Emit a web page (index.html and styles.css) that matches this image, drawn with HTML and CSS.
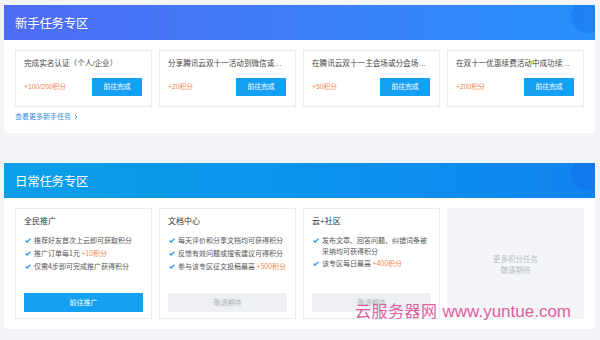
FILE: index.html
```html
<!DOCTYPE html>
<html lang="zh-CN">
<head>
<meta charset="utf-8">
<title>积分任务</title>
<link rel="stylesheet" href="styles.css">
</head>
<body>
<div class="page">
  <section class="panel">
    <div class="panel-head head-new"><h2>新手任务专区</h2></div>
    <div class="panel-body">
      <div class="cards">
        <div class="task">
          <div class="task-title">完成实名认证（个人/企业）</div>
          <div class="task-row"><span class="pts">+100/200积分</span><span class="btn">前往完成</span></div>
        </div>
        <div class="task">
          <div class="task-title">分享腾讯云双十一活动到微信或朋友圈</div>
          <div class="task-row"><span class="pts">+20积分</span><span class="btn">前往完成</span></div>
        </div>
        <div class="task">
          <div class="task-title">在腾讯云双十一主会场或分会场购买</div>
          <div class="task-row"><span class="pts">+50积分</span><span class="btn">前往完成</span></div>
        </div>
        <div class="task">
          <div class="task-title">在双十一优惠续费活动中成功续费云服务器</div>
          <div class="task-row"><span class="pts">+200积分</span><span class="btn">前往完成</span></div>
        </div>
      </div>
      <a class="more" href="#">查看更多新手任务<svg class="chev" viewBox="0 0 6 8" width="4" height="6"><path d="M1.5 1 L4.5 4 L1.5 7" fill="none" stroke="#2f8de4" stroke-width="1.4"/></svg></a>
    </div>
  </section>

  <section class="panel panel-daily">
    <div class="panel-head head-daily"><h2>日常任务专区</h2></div>
    <div class="panel-body body-daily">
      <div class="cards">
        <div class="daily">
          <div class="daily-title">全民推广</div>
          <ul class="list">
            <li><svg class="ck" viewBox="0 0 6 5"><path d="M0.6 2.6 L2.2 4.1 L5.4 0.8" fill="none" stroke="#3a9be6" stroke-width="1.4"/></svg><span>推荐好友首次上云即可获取积分</span></li>
            <li><svg class="ck" viewBox="0 0 6 5"><path d="M0.6 2.6 L2.2 4.1 L5.4 0.8" fill="none" stroke="#3a9be6" stroke-width="1.4"/></svg><span>推广订单每1元 <em>+10积分</em></span></li>
            <li><svg class="ck" viewBox="0 0 6 5"><path d="M0.6 2.6 L2.2 4.1 L5.4 0.8" fill="none" stroke="#3a9be6" stroke-width="1.4"/></svg><span>仅需4步即可完成推广获得积分</span></li>
          </ul>
          <span class="wide-btn go">前往推广</span>
        </div>
        <div class="daily">
          <div class="daily-title">文档中心</div>
          <ul class="list">
            <li><svg class="ck" viewBox="0 0 6 5"><path d="M0.6 2.6 L2.2 4.1 L5.4 0.8" fill="none" stroke="#3a9be6" stroke-width="1.4"/></svg><span>每天评价和分享文档均可获得积分</span></li>
            <li><svg class="ck" viewBox="0 0 6 5"><path d="M0.6 2.6 L2.2 4.1 L5.4 0.8" fill="none" stroke="#3a9be6" stroke-width="1.4"/></svg><span>反馈有效问题或搜索建议可得积分</span></li>
            <li><svg class="ck" viewBox="0 0 6 5"><path d="M0.6 2.6 L2.2 4.1 L5.4 0.8" fill="none" stroke="#3a9be6" stroke-width="1.4"/></svg><span>参与该专区征文投稿最高 <em>+500积分</em></span></li>
          </ul>
          <span class="wide-btn wait">敬请期待</span>
        </div>
        <div class="daily">
          <div class="daily-title">云+社区</div>
          <ul class="list">
            <li><svg class="ck" viewBox="0 0 6 5"><path d="M0.6 2.6 L2.2 4.1 L5.4 0.8" fill="none" stroke="#3a9be6" stroke-width="1.4"/></svg><span>发布文章、回答问题、纠错词条被采纳均可获得积分</span></li>
            <li><svg class="ck" viewBox="0 0 6 5"><path d="M0.6 2.6 L2.2 4.1 L5.4 0.8" fill="none" stroke="#3a9be6" stroke-width="1.4"/></svg><span>该专区每日最高 <em>+400积分</em></span></li>
          </ul>
          <span class="wide-btn wait">敬请期待</span>
        </div>
        <div class="placeholder">
          <span>更多积分任务</span>
          <span>敬请期待</span>
        </div>
      </div>
    </div>
  </section>
</div>
<div class="watermark"><span class="wm-cn">云服务器网</span> <span class="wm-en">www.yuntue.com</span></div>
</body>
</html>
```

FILE: styles.css
```css
* { box-sizing: border-box; }
html, body { margin: 0; padding: 0; }
body {
  width: 600px;
  height: 340px;
  overflow: hidden;
  background: #f3f5f8;
  font-family: "Liberation Sans", "Noto Sans CJK SC", sans-serif;
  font-size: 7px;
  line-height: 10px;
  color: #333;
  position: relative;
}
.page {
  padding: 5px 5px 0 4px;
}
.panel {
  background: #fff;
  width: 591px;
}
.panel-daily { margin-top: 30px; }
.panel-head {
  height: 35px;
  padding-left: 11px;
  display: flex;
  align-items: center;
  position: relative;
  overflow: hidden;
}
.panel-head h2 {
  margin: 0;
  font-family: "Noto Sans CJK SC", sans-serif;
  font-size: 12.5px;
  line-height: 16px;
  font-weight: 400;
  color: #fff;
  letter-spacing: -0.3px;
}
.panel-head::after {
  content: "";
  position: absolute;
  right: -10px;
  top: -6px;
  width: 34px;
  height: 34px;
  border-radius: 50%;
  background: rgba(10, 90, 230, 0.25);
}
.head-new { background: linear-gradient(90deg, #4e6bf4 0%, #3d80f8 55%, #268ff9 100%); }
.head-daily { background: linear-gradient(90deg, #0b9fe9 0%, #0b94ec 50%, #1284f0 100%); }
.panel-body {
  padding: 10px 10px 0 11px;
}
.body-daily { padding-bottom: 10px; }
.cards {
  display: grid;
  grid-template-columns: repeat(4, 137px);
  column-gap: 7px;
}
.task {
  height: 57px;
  border: 1px solid #e9ecf1;
  padding: 8px 9px 0 8px;
}
.task-title {
  font-size: 7.6px;
  line-height: 9px;
  color: #444;
  white-space: nowrap;
  overflow: hidden;
  text-overflow: ellipsis;
}
.task-row {
  margin-top: 10px;
  display: flex;
  align-items: center;
  justify-content: space-between;
}
.pts {
  font-size: 6.8px;
  color: #f0884e;
}
.btn {
  width: 50px;
  height: 18px;
  background: #16a0f3;
  color: #fff;
  font-size: 6.8px;
  display: flex;
  align-items: center;
  justify-content: center;
}
.more {
  display: flex;
  width: max-content;
  align-items: center;
  gap: 3px;
  margin-top: 5px;
  padding-bottom: 11px;
  font-size: 7px;
  line-height: 10px;
  color: #2f8de4;
  text-decoration: none;
}
.chev { display: block; }
.daily {
  height: 111px;
  border: 1px solid #e9ecf1;
  padding: 8px 7px 0 8px;
  display: flex;
  flex-direction: column;
}
.daily-title {
  font-size: 8px;
  line-height: 10px;
  color: #333;
}
.list {
  list-style: none;
  margin: 8px 0 0 0;
  padding: 0;
  font-family: "Noto Sans CJK SC", sans-serif;
}
.list li {
  display: flex;
  align-items: flex-start;
  gap: 2px;
  font-size: 7px;
  line-height: 10.5px;
  margin-bottom: 2.4px;
  color: #555;
}
.ck {
  flex: none;
  width: 6px;
  height: 5px;
  margin: 3px 1px 0 1px;
}
.list em {
  font-style: normal;
  color: #f0884e;
  white-space: nowrap;
}
.wide-btn {
  margin-top: auto;
  margin-bottom: 6px;
  margin-right: 1px;
  height: 19px;
  display: flex;
  align-items: center;
  justify-content: center;
  font-size: 7px;
}
.go { background: #16a0f3; color: #fff; }
.wait { background: #eef0f4; color: #aeb2ba; }
.placeholder {
  height: 111px;
  background: #f3f5f8;
  display: flex;
  flex-direction: column;
  align-items: center;
  justify-content: center;
  font-size: 7.5px;
  line-height: 11px;
  color: #b9bcc2;
  padding-top: 2px;
}
.watermark {
  position: absolute;
  left: 355px;
  top: 299px;
  color: #e0609e;
  white-space: nowrap;
  display: flex;
  align-items: baseline;
  gap: 5px;
  line-height: 22px;
}
.wm-cn {
  font-family: "Noto Sans CJK SC", sans-serif;
  font-size: 16px;
  letter-spacing: 0.5px;
}
.wm-en {
  font-family: "Liberation Sans", Arial, sans-serif;
  font-size: 17px;
}
```
